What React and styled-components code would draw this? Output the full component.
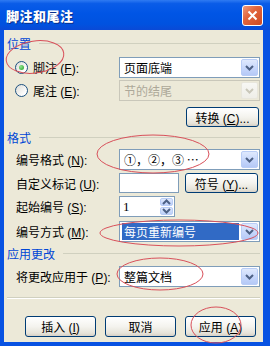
import React from 'react';
import styled, { createGlobalStyle } from 'styled-components';

const GlobalStyle = createGlobalStyle`
  html, body {
    margin: 0;
    padding: 0;
    background: #ffffff;
  }
  * {
    box-sizing: border-box;
  }
`;

// Fenetre XP
const Window = styled.div`
  position: relative;
  width: 270px;
  height: 346px;
  display: flex;
  flex-direction: column;
  background: #0852e2;
  font-family: 'Liberation Sans', 'Noto Sans CJK SC', sans-serif;
  font-size: 12px;
  color: #000;
`;

const TitleBar = styled.div`
  height: 30px;
  flex: none;
  display: flex;
  align-items: center;
  justify-content: space-between;
  padding: 0 7px 0 6px;
  background: linear-gradient(180deg, #2f7bf2 0%, #0a5ce8 12%, #0055e5 45%, #0052e0 80%, #0a49d6 100%);
`;

const Title = styled.span`
  color: #fff;
  font-family: 'Noto Sans CJK SC', sans-serif;
  font-size: 13px;
  font-weight: 900;
  letter-spacing: 0.5px;
  text-shadow: 1px 1px 0 #0a2f8c;
`;

const CloseButton = styled.div`
  width: 21px;
  height: 21px;
  display: flex;
  align-items: center;
  justify-content: center;
  border: 1px solid #fff;
  border-radius: 3px;
  background: linear-gradient(135deg, #f09a7c 0%, #e2653d 40%, #cf4a22 100%);
`;

const Body = styled.div`
  flex: 1;
  margin: 0 7px 4px 4px;
  padding: 6px 3px 0 3px;
  background: #ece9d8;
  display: flex;
  flex-direction: column;
`;

// Titre de groupe
const GroupHeader = styled.div`
  height: 14px;
  margin-top: ${p => p.$top || 0}px;
  display: flex;
  align-items: center;
  color: #0046d5;
  font-size: 12px;

  &::after {
    content: '';
    flex: 1;
    height: 1px;
    margin-left: 8px;
    background: #d0d0bf;
  }
`;

const Row = styled.div`
  display: grid;
  grid-template-columns: ${p => (p.$radio ? 104 : 103)}px 1fr;
  align-items: center;
  padding-left: ${p => (p.$radio ? 8 : 9)}px;
  margin-top: ${p => p.$top || 0}px;
`;

const Label = styled.span`
  display: flex;
  align-items: center;
  gap: 5px;
  white-space: pre;
`;

const Radio = styled.span`
  width: 13px;
  height: 13px;
  border-radius: 50%;
  border: 1px solid #1c5180;
  background: linear-gradient(135deg, #dcdcd7 0%, #ffffff 80%);
  display: flex;
  align-items: center;
  justify-content: center;

  &::after {
    content: '';
    display: ${p => (p.$checked ? 'block' : 'none')};
    width: 5px;
    height: 5px;
    border-radius: 50%;
    background: radial-gradient(circle at 35% 35%, #8fe38f, #21a121);
  }
`;

const Combo = styled.div`
  height: 21px;
  display: flex;
  align-items: stretch;
  border: 1px solid ${p => (p.$disabled ? '#c9c7ba' : '#7f9db9')};
  background: ${p => (p.$disabled ? '#ece9d8' : '#fff')};
  color: ${p => (p.$disabled ? '#aca899' : '#000')};
`;

const ComboText = styled.div`
  flex: 1;
  display: flex;
  align-items: center;
  margin: 1px 1px 1px 2px;
  padding-left: 2px;
  font-family: 'Noto Sans CJK SC', 'DejaVu Sans', sans-serif;
  font-size: 12px;
  white-space: pre;
  background: ${p => (p.$selected ? '#316ac5' : 'transparent')};
  color: ${p => (p.$selected ? '#fff' : 'inherit')};
`;

const ComboButton = styled.div`
  width: 17px;
  margin: 1px;
  display: flex;
  align-items: center;
  justify-content: center;
  border-radius: 2px;
  border: 1px solid ${p => (p.$disabled ? '#e8e6dc' : '#b9cdf6')};
  background: ${p =>
    p.$disabled
      ? 'linear-gradient(180deg, #f7f7f4, #efeee8)'
      : 'linear-gradient(180deg, #dfe9fd 0%, #c4d5fb 60%, #b5c9f6 100%)'};
`;

const Chevron = ({ color = '#4d6185', up }) => (
  <svg width="9" height="6" viewBox="0 0 9 6">
    <path d={up ? 'M1 5 L4.5 1.5 L8 5' : 'M1 1 L4.5 4.5 L8 1'} fill="none" stroke={color} strokeWidth="2" />
  </svg>
);

const TextBox = styled.div`
  height: ${p => p.$h || 20}px;
  width: ${p => p.$w}px;
  border: 1px solid #7f9db9;
  background: #fff;
  display: flex;
  align-items: stretch;
`;

const BoxText = styled.span`
  flex: 1;
  display: flex;
  align-items: center;
  padding-left: 3px;
  font-family: 'Liberation Serif', serif;
  font-size: 13px;
`;

const Spin = styled.div`
  width: 13px;
  margin: 1px;
  display: flex;
  flex-direction: column;
  gap: 1px;
`;

const SpinPart = styled.div`
  flex: 1;
  display: flex;
  align-items: center;
  justify-content: center;
  border-radius: 2px;
  border: 1px solid #b9cdf6;
  background: linear-gradient(180deg, #dfe9fd, #bccff8);
`;

const Controls = styled.div`
  display: flex;
  align-items: center;
  gap: 6px;
`;

const Button = styled.div`
  width: ${p => p.$w || 71}px;
  height: ${p => p.$h || 21}px;
  display: flex;
  align-items: center;
  justify-content: center;
  border: 1px solid #003c74;
  border-radius: 3px;
  background: linear-gradient(180deg, #ffffff 0%, #f4f3ee 50%, #e6e3d9 85%, #d6d0c5 100%);
  font-size: 12px;
  white-space: pre;
`;

const RightAlign = styled.div`
  display: flex;
  justify-content: flex-end;
  padding-right: 1px;
  margin-top: ${p => p.$top || 0}px;
`;

const Separator = styled.div`
  height: 2px;
  margin-top: 10px;
  border-top: 1px solid #d0d0bf;
  border-bottom: 1px solid #fff;
`;

const ButtonBar = styled.div`
  display: flex;
  gap: 9px;
  padding-left: 18px;
  margin-top: 17px;
`;

const Notes = styled.svg`
  position: absolute;
  inset: 0;
  pointer-events: none;
`;

function Dropdown({ text, disabled, selected }) {
  return (
    <Combo $disabled={disabled}>
      <ComboText $selected={selected}>{text}</ComboText>
      <ComboButton $disabled={disabled}>
        <Chevron color={disabled ? '#c9c7ba' : '#4d6185'} />
      </ComboButton>
    </Combo>
  );
}

// libelle avec lettre d'acces soulignee
function Field({ text, hotkey, radio, checked }) {
  return (
    <Label>
      {radio && <Radio $checked={checked} />}
      <span>{text} (<u>{hotkey}</u>):</span>
    </Label>
  );
}

export default function App() {
  return (
    <>
      <GlobalStyle />
      <Window>
        <TitleBar>
          <Title>脚注和尾注</Title>
          <CloseButton>
            <svg width="11" height="11" viewBox="0 0 11 11">
              <path d="M1.5 1.5 L9.5 9.5 M9.5 1.5 L1.5 9.5" stroke="#fff" strokeWidth="2" />
            </svg>
          </CloseButton>
        </TitleBar>
        <Body>
          <GroupHeader>位置</GroupHeader>
          <Row $radio $top={7}>
            <Field radio checked text="脚注" hotkey="F" />
            <Dropdown text="页面底端" />
          </Row>
          <Row $radio $top={2}>
            <Field radio text="尾注" hotkey="E" />
            <Dropdown text="节的结尾" disabled />
          </Row>
          <RightAlign $top={6}>
            <Button $w={73} $h={20}><span>转换 (<u>C</u>)...</span></Button>
          </RightAlign>

          <GroupHeader $top={3}>格式</GroupHeader>
          <Row $top={5}>
            <Field text="编号格式" hotkey="N" />
            <Dropdown text="①，②，③ ⋯" />
          </Row>
          <Row $top={3}>
            <Field text="自定义标记" hotkey="U" />
            <Controls>
              <TextBox $w={60} />
              <Button $w={73} $h={20}><span>符号 (<u>Y</u>)...</span></Button>
            </Controls>
          </Row>
          <Row $top={3}>
            <Field text="起始编号" hotkey="S" />
            <TextBox $w={56} $h={21}>
              <BoxText>1</BoxText>
              <Spin>
                <SpinPart><Chevron up /></SpinPart>
                <SpinPart><Chevron /></SpinPart>
              </Spin>
            </TextBox>
          </Row>
          <Row $top={4}>
            <Field text="编号方式" hotkey="M" />
            <Dropdown text="每页重新编号" selected />
          </Row>

          <GroupHeader $top={4}>应用更改</GroupHeader>
          <Row $top={6}>
            <Field text="将更改应用于" hotkey="P" />
            <Dropdown text="整篇文档" />
          </Row>
          <Separator />
          <ButtonBar>
            <Button><span>插入 (<u>I</u>)</span></Button>
            <Button>取消</Button>
            <Button><span>应用 (<u>A</u>)</span></Button>
          </ButtonBar>
        </Body>

        {/* annotations rouges */}
        <Notes width="270" height="346" viewBox="0 0 270 346">
          <g fill="none" stroke="#d8505a" strokeWidth="1">
            <ellipse cx="35" cy="57" rx="29" ry="16" transform="rotate(-8 35 57)" />
            <ellipse cx="153" cy="154" rx="56" ry="19" />
            <ellipse cx="179" cy="233" rx="79" ry="13" />
            <ellipse cx="160" cy="274" rx="43" ry="16" />
            <ellipse cx="216" cy="325" rx="25" ry="18" />
          </g>
        </Notes>
      </Window>
    </>
  );
}
